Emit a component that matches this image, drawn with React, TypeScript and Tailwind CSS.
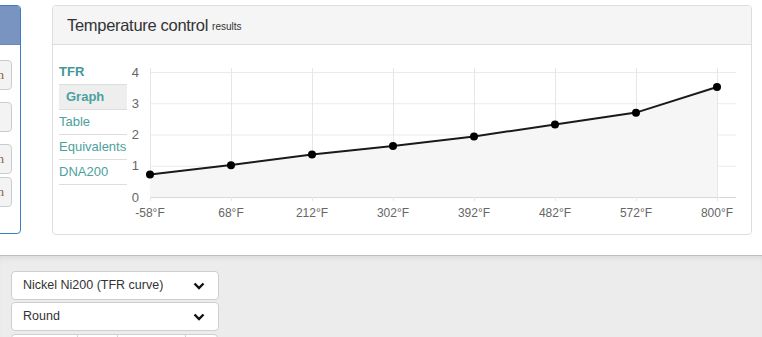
import React from "react";

const xs = [23, 104, 185, 266, 347, 428, 509, 590];
const labels = ["-58°F", "68°F", "212°F", "302°F", "392°F", "482°F", "572°F", "800°F"];
const vals = [0.72, 1.02, 1.36, 1.63, 1.94, 2.32, 2.7, 3.52];
const Y0 = 137;
const U = 31.25;
const yOf = (v: number) => Y0 - v * U;

function Chart() {
  const pts = xs.map((x, i) => `${x},${yOf(vals[i]).toFixed(1)}`).join(" ");
  const area = `${xs[0]},${Y0} ${pts} ${xs[xs.length - 1]},${Y0}`;
  return (
    <svg width={623} height={165} className="block" style={{ fontFamily: "'Liberation Sans', Arial, sans-serif" }}>
      {[0, 1, 2, 3, 4].map((v) => (
        <line key={v} x1={23} x2={609} y1={yOf(v) + 0.5} y2={yOf(v) + 0.5} stroke={v === 0 ? "#d8d8d8" : "#ebebeb"} strokeWidth={1} />
      ))}
      {xs.map((x) => (
        <line key={x} x1={x + 0.5} x2={x + 0.5} y1={8} y2={Y0 + 4} stroke="#e6e6e6" strokeWidth={1} />
      ))}
      <polygon points={area} fill="#f6f6f6" />
      <polyline points={pts} fill="none" stroke="#1a1a1a" strokeWidth={2} />
      {xs.map((x, i) => (
        <circle key={x} cx={x} cy={yOf(vals[i])} r={4} fill="#000" />
      ))}
      {[0, 1, 2, 3, 4].map((v) => (
        <text key={v} x={12} y={yOf(v) + 4.5} textAnchor="end" fontSize={13} fill="#666">
          {v}
        </text>
      ))}
      {xs.map((x, i) => (
        <text key={x} x={x} y={157} textAnchor="middle" fontSize={12} fill="#666">
          {labels[i]}
        </text>
      ))}
    </svg>
  );
}

function Chevron() {
  return (
    <svg width="12" height="8" viewBox="0 0 12 8" className="block">
      <polyline points="1.5,1.5 6,6 10.5,1.5" fill="none" stroke="#111" strokeWidth="2.4" />
    </svg>
  );
}

function SideBtn({ text }: { text: string }) {
  return (
    <div className="h-[30px] w-[190px] ml-[-8px] rounded-[4px] border border-[#ccc] bg-[#f3f3f3] flex items-center justify-end pr-[7px] text-[13px] text-[#8a5a3a]" style={{ fontFamily: "'Liberation Serif', serif" }}>
      {text}
    </div>
  );
}

export default function App() {
  const font = { fontFamily: "'Liberation Sans', Arial, sans-serif" };
  return (
    <div className="w-[762px] h-[337px] overflow-hidden bg-white" style={font}>
      <div className="h-[255px] flex items-start pt-[5px] overflow-hidden">
        {/* left panel, mostly off-screen */}
        <div className="ml-[-180px] w-[201px] h-[229px] shrink-0 border border-[#3b7dc4] rounded-[4px] overflow-hidden flex flex-col bg-white">
          <div className="h-[39px] bg-[#7a94c2] border-b border-[#6c88b8]" />
          <div className="flex flex-col items-end pr-[8px] pt-[15px]">
            <div className="w-full flex justify-end"><SideBtn text="Platinum" /></div>
            <div className="w-full flex justify-end mt-[12px]"><SideBtn text="" /></div>
            <div className="w-full flex justify-end mt-[12px]"><SideBtn text="Platinum" /></div>
            <div className="w-full flex justify-end mt-[3px]"><SideBtn text="Platinum" /></div>
          </div>
        </div>
        {/* main card */}
        <div className="ml-[31px] w-[700px] h-[230px] shrink-0 border border-[#dddddd] rounded-[4px] overflow-hidden flex flex-col">
          <div className="h-[39px] shrink-0 bg-[#f5f5f5] border-b border-[#dddddd] flex items-center pl-[14px] text-[#333]">
            <span className="text-[16.5px] tracking-[-0.3px]">Temperature control</span>
            <span className="text-[10px] ml-[4px] mt-[3px]">results</span>
          </div>
          <div className="flex pt-[15px] pl-[6px]">
            <div className="w-[68px] flex flex-col text-[13px] text-[#4ba19e]">
              <div className="h-[24px] flex items-center font-bold text-[#3f9894]">TFR</div>
              <div className="h-[26px] flex items-center pl-[7px] font-bold bg-[#eeeeee] border-t border-b border-[#dddddd]">Graph</div>
              <div className="h-[25px] flex items-center border-b border-[#dddddd]">Table</div>
              <div className="h-[25px] flex items-center border-b border-[#dddddd]">Equivalents</div>
              <div className="h-[25px] flex items-center border-b border-[#dddddd]">DNA200</div>
            </div>
            <Chart />
          </div>
        </div>
      </div>
      <div className="h-[82px] border-t border-[#bdbdbd] bg-[#ececec] shadow-[inset_0_5px_6px_-3px_rgba(0,0,0,0.08)] pl-[11px] pt-[15px] flex flex-col gap-[2px]">
        <div className="w-[208px] h-[29px] shrink-0 bg-white border border-[#cfcfcf] rounded-[4px] flex items-center justify-between pl-[11px] pr-[13px] text-[12.5px] text-[#333]">
          <span>Nickel Ni200 (TFR curve)</span>
          <Chevron />
        </div>
        <div className="w-[208px] h-[29px] shrink-0 bg-white border border-[#cfcfcf] rounded-[4px] flex items-center justify-between pl-[11px] pr-[13px] text-[12.5px] text-[#333]">
          <span>Round</span>
          <Chevron />
        </div>
        <div className="flex shrink-0 mt-[1px]">
          <div className="w-[67px] h-[29px] bg-white border border-[#cfcfcf] rounded-l-[4px]" />
          <div className="w-[41px] h-[29px] bg-white border border-[#cfcfcf] -ml-px" />
          <div className="w-[69px] h-[29px] bg-white border border-[#cfcfcf] -ml-px" />
          <div className="w-[33px] h-[29px] bg-white border border-[#cfcfcf] rounded-r-[4px] -ml-px" />
        </div>
      </div>
    </div>
  );
}
